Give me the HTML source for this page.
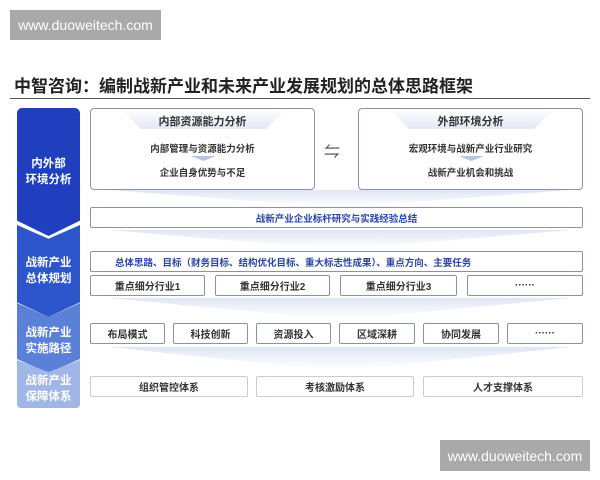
<!DOCTYPE html>
<html><head><meta charset="utf-8"><style>
body{margin:0;width:600px;height:480px;background:#fff;position:relative;overflow:hidden;font-family:"Liberation Sans","Noto Sans CJK SC",sans-serif}
.a{position:absolute}
.wm{background:#a9a9a9;color:#fff;font-size:14px;display:flex;align-items:center;justify-content:center}
.b{position:absolute;border:1px solid #8a93a3;border-radius:2px;background:#fff;display:flex;align-items:center;justify-content:center;font-size:10px;font-weight:bold;color:#333;box-sizing:border-box}
.blue{color:#2a44a8}
.seg{position:absolute;left:17px;width:63px;color:#fff;font-weight:bold;font-size:11.5px;line-height:16px;display:flex;align-items:center;justify-content:center;text-align:center}
.shade{position:absolute;background:linear-gradient(#dfe5f4,#fff);clip-path:polygon(0 0,100% 0,55% 100%,45% 100%)}
</style></head><body>
<div class="a wm" style="left:10px;top:10px;width:151px;height:30px">www.duoweitech.com</div>
<div class="a" style="left:14px;top:72px;font-size:17px;font-weight:bold;color:#222">中智咨询：编制战新产业和未来产业发展规划的总体思路框架</div>
<div class="a" style="left:10px;top:98px;width:580px;height:1px;background:#555"></div>

<div class="seg" style="top:108px;height:128px;background:#1f3fbf;border-radius:5px 5px 0 0;clip-path:polygon(0 0,100% 0,100% 88%,50% 100%,0 88%)">内外部<br>环境分析</div>
<div class="seg" style="top:225px;height:92px;background:#2d55cc;clip-path:polygon(0 0,50% 15%,100% 0,100% 84%,50% 100%,0 84%)"><span style="margin-top:0">战新产业<br>总体规划</span></div>
<div class="seg" style="top:303px;height:70px;background:#5b80d8;clip-path:polygon(0 0,50% 20%,100% 0,100% 80%,50% 100%,0 80%)"><span style="margin-top:6px">战新产业<br>实施路径</span></div>
<div class="seg" style="top:360px;height:48px;background:#9fb6e6;border-radius:0 0 4px 4px;clip-path:polygon(0 0,50% 25%,100% 0,100% 100%,0 100%)"><span style="margin-top:10px">战新产业<br>保障体系</span></div>

<div class="b" style="left:90px;top:108px;width:225px;height:82px;display:block;border-radius:4px">
<div class="a" style="left:30px;top:0;width:165px;height:20px;background:linear-gradient(#fff,#e3e8f5);clip-path:polygon(0 0,100% 0,88% 100%,12% 100%)"></div>
<div class="a" style="left:0;top:4px;width:100%;text-align:center;font-size:11px">内部资源能力分析</div>
<div class="a" style="left:0;top:32px;width:100%;text-align:center;font-size:9.5px">内部管理与资源能力分析</div>
<div class="a" style="left:100px;top:47px;width:25px;height:5px;background:#b9c4e0;clip-path:polygon(0 0,100% 0,50% 100%)"></div>
<div class="a" style="left:0;top:56px;width:100%;text-align:center;font-size:9.5px">企业自身优势与不足</div>
</div>
<div class="a" style="left:324px;top:138px;font-size:16px;color:#445">⇋</div>
<div class="b" style="left:358px;top:108px;width:225px;height:82px;display:block;border-radius:4px">
<div class="a" style="left:30px;top:0;width:165px;height:20px;background:linear-gradient(#fff,#e3e8f5);clip-path:polygon(0 0,100% 0,88% 100%,12% 100%)"></div>
<div class="a" style="left:0;top:4px;width:100%;text-align:center;font-size:11px">外部环境分析</div>
<div class="a" style="left:0;top:32px;width:100%;text-align:center;font-size:9.5px">宏观环境与战新产业行业研究</div>
<div class="a" style="left:100px;top:47px;width:25px;height:5px;background:#b9c4e0;clip-path:polygon(0 0,100% 0,50% 100%)"></div>
<div class="a" style="left:0;top:56px;width:100%;text-align:center;font-size:9.5px">战新产业机会和挑战</div>
</div>
<div class="shade" style="left:110px;top:190px;width:460px;height:16px"></div>
<div class="b blue" style="left:90px;top:207px;width:493px;height:21px;font-size:9.5px">战新产业企业标杆研究与实践经验总结</div>
<div class="shade" style="left:110px;top:230px;width:460px;height:18px"></div>
<div class="b blue" style="left:90px;top:251px;width:493px;height:21px;font-size:9.5px;justify-content:flex-start;padding-left:24px">总体思路、目标（财务目标、结构优化目标、重大标志性成果）、重点方向、主要任务</div>
<div class="b" style="left:90px;top:275px;width:115px;height:21px">重点细分行业1</div>
<div class="b" style="left:215px;top:275px;width:115px;height:21px">重点细分行业2</div>
<div class="b" style="left:340px;top:275px;width:117px;height:21px">重点细分行业3</div>
<div class="b" style="left:467px;top:275px;width:116px;height:21px">······</div>
<div class="shade" style="left:110px;top:298px;width:460px;height:20px"></div>
<div class="b" style="left:90px;top:323px;width:75px;height:21px">布局模式</div>
<div class="b" style="left:173px;top:323px;width:75px;height:21px">科技创新</div>
<div class="b" style="left:256px;top:323px;width:75px;height:21px">资源投入</div>
<div class="b" style="left:339px;top:323px;width:76px;height:21px">区域深耕</div>
<div class="b" style="left:423px;top:323px;width:76px;height:21px">协同发展</div>
<div class="b" style="left:507px;top:323px;width:76px;height:21px">······</div>
<div class="shade" style="left:110px;top:347px;width:460px;height:22px"></div>
<div class="b" style="left:90px;top:376px;width:158px;height:21px;border-color:#c8ccd4">组织管控体系</div>
<div class="b" style="left:256px;top:376px;width:158px;height:21px;border-color:#c8ccd4">考核激励体系</div>
<div class="b" style="left:423px;top:376px;width:160px;height:21px;border-color:#c8ccd4">人才支撑体系</div>

<div class="a wm" style="left:440px;top:440px;width:150px;height:31px">www.duoweitech.com</div>
</body></html>
